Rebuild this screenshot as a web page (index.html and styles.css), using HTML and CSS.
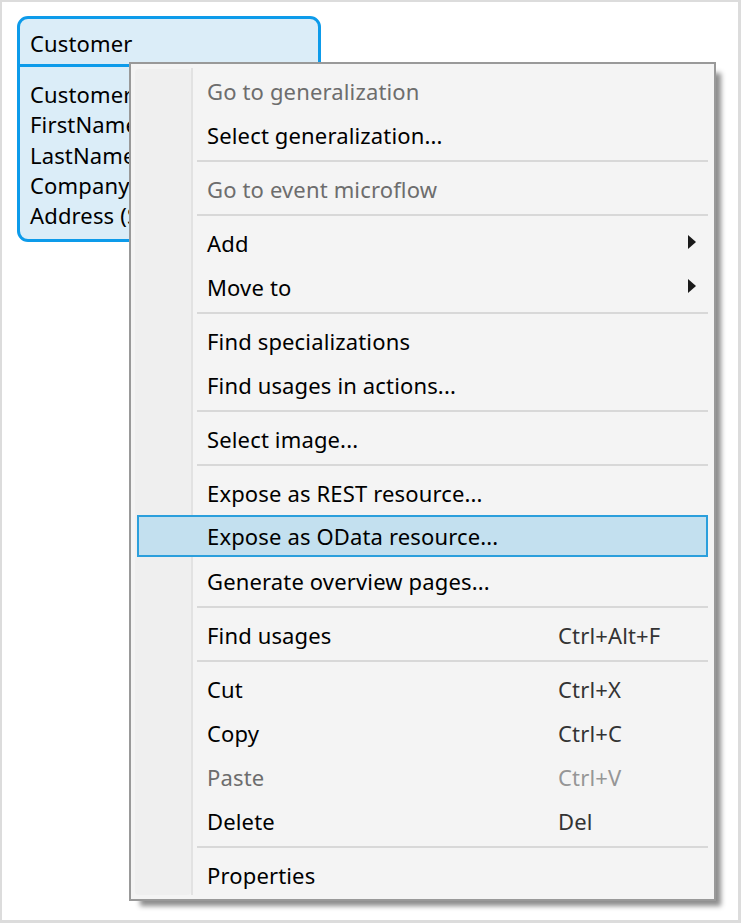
FILE: index.html
```html
<!DOCTYPE html>
<html>
<head>
<meta charset="utf-8">
<link rel="stylesheet" href="styles.css">
</head>
<body>
<div class="page">
  <div class="entity">
    <div class="entity-header">Customer</div>
    <div class="entity-body">
      <div class="attr">CustomerID</div>
      <div class="attr">FirstName</div>
      <div class="attr">LastName</div>
      <div class="attr">CompanyName</div>
      <div class="attr">Address (String)</div>
    </div>
  </div>

  <div class="menu">
    <div class="item disabled"><span class="label">Go to generalization</span></div>
    <div class="item"><span class="label">Select generalization...</span></div>
    <div class="sep"></div>
    <div class="item disabled"><span class="label">Go to event microflow</span></div>
    <div class="sep"></div>
    <div class="item has-sub"><span class="label">Add</span><span class="arrow"></span></div>
    <div class="item has-sub"><span class="label">Move to</span><span class="arrow"></span></div>
    <div class="sep"></div>
    <div class="item"><span class="label">Find specializations</span></div>
    <div class="item"><span class="label">Find usages in actions...</span></div>
    <div class="sep"></div>
    <div class="item"><span class="label">Select image...</span></div>
    <div class="sep"></div>
    <div class="item"><span class="label">Expose as REST resource...</span></div>
    <div class="item active"><span class="label">Expose as OData resource...</span></div>
    <div class="item"><span class="label">Generate overview pages...</span></div>
    <div class="sep"></div>
    <div class="item"><span class="label">Find usages</span><span class="shortcut">Ctrl+Alt+F</span></div>
    <div class="sep"></div>
    <div class="item"><span class="label">Cut</span><span class="shortcut">Ctrl+X</span></div>
    <div class="item"><span class="label">Copy</span><span class="shortcut">Ctrl+C</span></div>
    <div class="item disabled"><span class="label">Paste</span><span class="shortcut">Ctrl+V</span></div>
    <div class="item"><span class="label">Delete</span><span class="shortcut">Del</span></div>
    <div class="sep"></div>
    <div class="item"><span class="label">Properties</span></div>
  </div>
</div>
</body>
</html>
```

FILE: styles.css
```css
* { box-sizing: border-box; }

html, body {
  margin: 0;
  padding: 0;
  background: #ffffff;
}

body {
  font-family: "Noto Sans", "Open Sans", sans-serif;
  font-size: 22px;
  letter-spacing: 0.15px;
  color: #000;
}

.page {
  position: relative;
  width: 741px;
  height: 923px;
  background: #ffffff;
  border-style: solid;
  border-color: #dcdcdc;
  border-width: 2px 3px 3px 2px;
  overflow: hidden;
}

/* diagram node */
.entity {
  position: absolute;
  left: 15px;
  top: 14px;
  width: 304px;
  height: 226px;
  background: #dbedf8;
  border: 3px solid #0d9bea;
  border-radius: 11px;
  overflow: hidden;
}

.entity-header {
  height: 48px;
  line-height: 48px;
  padding-left: 10px;
  border-bottom: 3px solid #0d9bea;
  white-space: nowrap;
}

.entity-body {
  padding: 12px 10px 6px 10px;
}

.attr {
  line-height: 30.3px;
  white-space: nowrap;
}

/* context menu overlay */
.menu {
  position: absolute;
  left: 127px;
  top: 60px;
  width: 587px;
  height: 839px;
  background: #f4f4f4;
  border: 2px solid #999999;
  padding: 5px 0 2px 0;
  box-shadow: 8px 8px 5px -3px rgba(0, 0, 0, 0.45);
}

.menu::before {
  content: "";
  position: absolute;
  left: 4px;
  top: 5px;
  bottom: 4px;
  width: 56px;
  background: #efefef;
  border-radius: 4px;
}

.menu::after {
  content: "";
  position: absolute;
  left: 60px;
  top: 4px;
  bottom: 4px;
  width: 2px;
  background: #e2e2e2;
}

.item {
  position: relative;
  z-index: 1;
  display: grid;
  grid-template-columns: 351px auto;
  align-items: center;
  height: 44px;
  line-height: 44px;
  margin: 0 6px;
  padding-left: 70px;
  white-space: nowrap;
}

.item.disabled .label { color: #6d6d6d; }

.shortcut { color: #333333; }
.item.disabled .shortcut { color: #969696; }

.item.active {
  height: 42px;
  line-height: 38px;
  margin-bottom: 2px;
  padding-left: 68px;
  background: #c3e0ef;
  border: 2px solid #2b9fdc;
  grid-template-columns: 351px auto;
}

.arrow {
  position: absolute;
  right: 12px;
  top: 50%;
  margin-top: -8px;
  width: 0;
  height: 0;
  border-top: 7px solid transparent;
  border-bottom: 7px solid transparent;
  border-left: 8px solid #1a1a1a;
}

.sep {
  position: relative;
  z-index: 1;
  height: 10px;
  margin: 0 6px 0 66px;
  padding-top: 3px;
}

.sep::before {
  content: "";
  display: block;
  height: 2px;
  background: #d8d8d8;
}
```
